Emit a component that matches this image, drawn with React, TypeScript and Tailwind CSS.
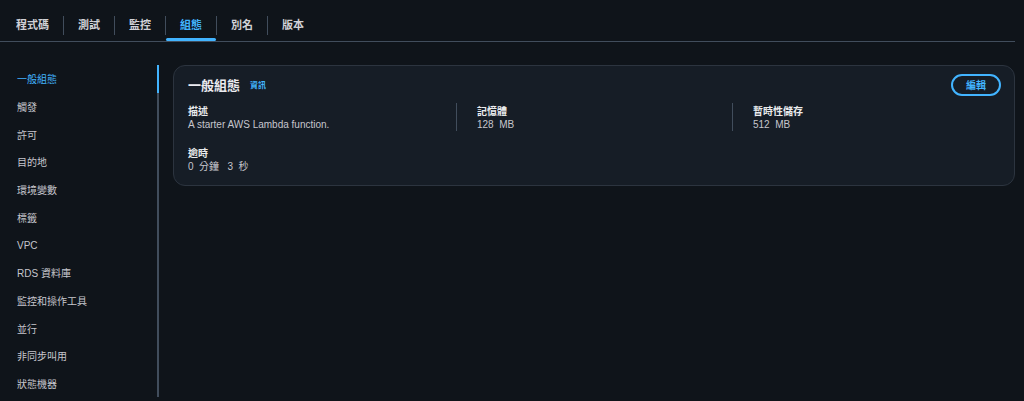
const tabs = ['程式碼', '測試', '監控', '組態', '別名', '版本'];

const navItems = [
  '一般組態',
  '觸發',
  '許可',
  '目的地',
  '環境變數',
  '標籤',
  'VPC',
  'RDS 資料庫',
  '監控和操作工具',
  '並行',
  '非同步叫用',
  '狀態機器',
];

const font = "font-['Liberation_Sans','Noto_Sans_CJK_TC',sans-serif]";

function Field({ label, value }: { label: string; value: string }) {
  return (
    <div className="pt-[2px]">
      <div className="text-[10px] leading-[13px] font-bold text-[#e9ebed]">{label}</div>
      <div className="text-[10px] leading-[13px] text-[#c6c6cd] whitespace-pre">{value}</div>
    </div>
  );
}

export default function App() {
  return (
    <div className={`${font} bg-[#0f141a] h-[401px] w-full overflow-hidden pr-[9px]`}>
      {/* Tabs */}
      <div className="flex items-stretch pt-[9px] pl-[2px] border-b border-[#414d5c]">
        {tabs.map((tab, idx) => (
          <div key={tab} className="flex items-center">
            {idx > 0 && <div className="w-px h-[19px] bg-[#414d5c]" />}
            <div
              className={`relative h-[32px] px-[14px] pt-[1px] flex items-center text-[11px] font-bold ${
                tab === '組態' ? 'text-[#42b4ff]' : 'text-[#d1d1d6]'
              }`}
            >
              {tab}
              {tab === '組態' && (
                <div className="absolute left-0 right-0 bottom-0 h-[3px] rounded-sm bg-[#42b4ff]" />
              )}
            </div>
          </div>
        ))}
      </div>

      <div className="flex pt-[23px]">
        {/* Side navigation */}
        <div className="w-[159px] shrink-0 border-r-2 border-[#414d5c]">
          {navItems.map((item, idx) => (
            <div
              key={item}
              className={`relative h-[27.7px] pl-[17px] pt-[2px] flex items-center text-[10px] ${
                idx === 0 ? 'text-[#42b4ff]' : 'text-[#c6c6cd]'
              }`}
            >
              {item}
              {idx === 0 && (
                <div className="absolute top-0 bottom-0 -right-[2px] w-[2px] bg-[#42b4ff]" />
              )}
            </div>
          ))}
        </div>

        {/* General configuration card */}
        <div className="flex-1 self-start ml-[14px] rounded-[12px] border border-[#2c343f] bg-[#161d26] pl-[14px] pr-[13px] pt-[8px] pb-[12px]">
          <div className="flex items-center justify-between h-[22px]">
            <div className="flex items-center pt-[1px]">
              <h2 className="text-[13px] font-bold text-[#ebebf0]">一般組態</h2>
              <span className="ml-[10px] text-[8px] font-bold text-[#42b4ff]">資訊</span>
            </div>
            <button className="w-[50px] h-[22px] rounded-full border-2 border-[#42b4ff] text-[10px] font-bold text-[#42b4ff] flex items-center justify-center">
              編輯
            </button>
          </div>

          <div className="mt-[7px] grid grid-cols-[268px_276px_1fr] gap-y-[14px]">
            <Field label="描述" value="A starter AWS Lambda function." />
            <div className="border-l border-[#414d5c] pl-[20px]">
              <Field label="記憶體" value={'128  MB'} />
            </div>
            <div className="border-l border-[#414d5c] pl-[20px]">
              <Field label="暫時性儲存" value={'512  MB'} />
            </div>
            <Field label="逾時" value={'0  分鐘   3  秒'} />
          </div>
        </div>
      </div>
    </div>
  );
}
